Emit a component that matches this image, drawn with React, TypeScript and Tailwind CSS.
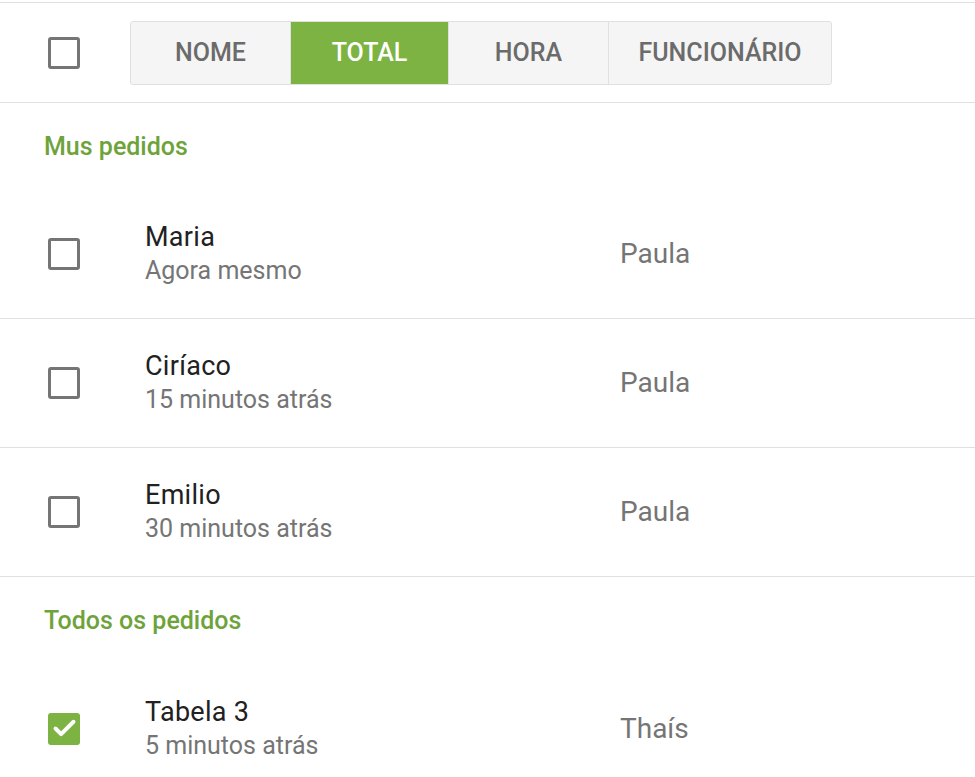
import { Check } from "lucide-react";

type Pedido = {
    nome: string,
    tempo: string,
    funcionario: string,
    marcado?: boolean
};

const meus: Pedido[] = [
    { nome: "Maria", tempo: "Agora mesmo", funcionario: "Paula" },
    { nome: "Ciríaco", tempo: "15 minutos atrás", funcionario: "Paula" },
    { nome: "Emilio", tempo: "30 minutos atrás", funcionario: "Paula" },
];

const todos: Pedido[] = [
    { nome: "Tabela 3", tempo: "5 minutos atrás", funcionario: "Thaís", marcado: true },
];

function Caixa({ marcado = false }: { marcado?: boolean }) {
    if (marcado) {
        return (
            <div className="w-[32px] h-[32px] rounded-[3px] bg-[#7cb342] flex items-center justify-center shrink-0">
                <Check className="w-[27px] h-[27px] text-white" strokeWidth={3.5} />
            </div>
        );
    }
    return <div className="w-[32px] h-[32px] rounded-[3px] border-[3px] border-[#757575] shrink-0" />;
}

function Linha({ pedido, ultima }: { pedido: Pedido, ultima?: boolean }) {
    return (
        <div className={`h-[129px] flex items-center pl-[48px] ${ultima ? '' : 'border-b border-[#e0e0e0]'}`}>
            <Caixa marcado={pedido.marcado} />
            <div className="ml-[65px] w-[475px] flex flex-col">
                <span className="text-[27px] leading-[32px] tracking-[0.3px] text-[#212121]">{pedido.nome}</span>
                <span className="text-[25px] leading-[32px] text-[#757575] mt-[2px]">{pedido.tempo}</span>
            </div>
            <span className="text-[28px] text-[#757575]">{pedido.funcionario}</span>
        </div>
    );
}

function Secao({ titulo }: { titulo: string }) {
    return (
        <div className="h-[87px] flex items-center pl-[44px]">
            <span className="text-[25px] font-medium text-[#6ea33c]">{titulo}</span>
        </div>
    );
}

export default function App() {
    const abas = ["NOME", "TOTAL", "HORA", "FUNCIONÁRIO"];
    const larguras = ["w-[159px]", "w-[158px]", "w-[160px]", "w-[223px]"];

    return (
        <div className="w-[975px] h-[777px] overflow-hidden bg-white pt-[2px]" style={{ fontFamily: "Roboto, 'Noto Sans', sans-serif" }}>
            <div className="border-t border-[#e0e0e0]">
                <div className="h-[100px] flex items-center pl-[48px] border-b border-[#e0e0e0]">
                    <Caixa />
                    <div className="ml-[50px] flex h-[64px] border border-[#e0e0e0] rounded-[3px] bg-[#f5f5f5] overflow-hidden">
                        {abas.map((aba, i) => (
                            <div
                                key={aba}
                                className={`${larguras[i]} flex items-center justify-center text-[25px] font-medium ${i > 0 ? 'border-l border-[#e0e0e0]' : ''} ${aba === 'TOTAL' ? 'bg-[#7cb342] text-white border-[#7cb342]' : 'text-[#6b6b6b]'}`}
                            >
                                {aba}
                            </div>
                        ))}
                    </div>
                </div>
                <Secao titulo="Mus pedidos" />
                {meus.map((p) => <Linha key={p.nome} pedido={p} />)}
                <Secao titulo="Todos os pedidos" />
                {todos.map((p) => <Linha key={p.nome} pedido={p} ultima />)}
            </div>
        </div>
    );
}
